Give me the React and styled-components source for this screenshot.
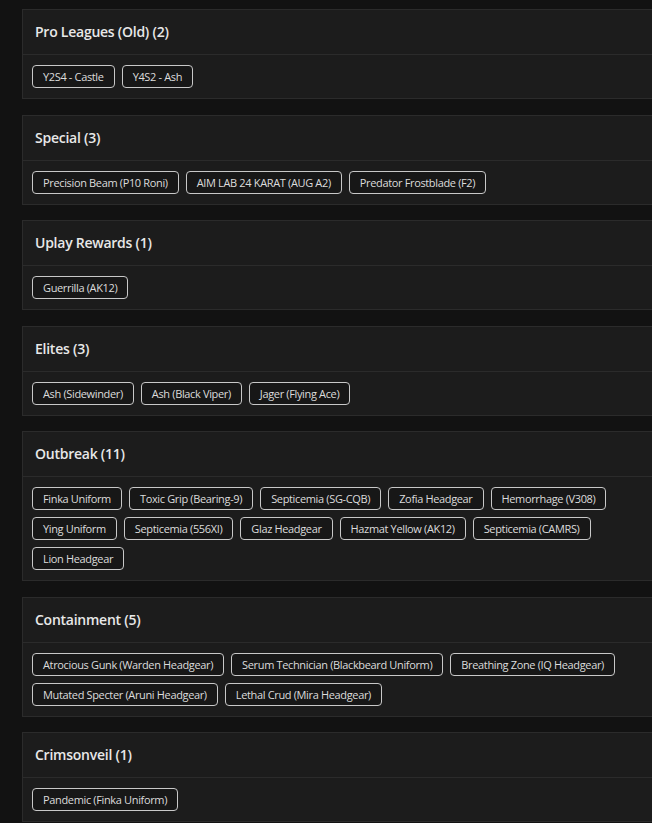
import styled, { createGlobalStyle } from "styled-components";

const GlobalStyle = createGlobalStyle`
  html, body {
    margin: 0;
    padding: 0;
    background: #121212;
    overflow: hidden;
  }
  body {
    font-family: "Open Sans", "Liberation Sans", sans-serif;
    color: #e4e4e4;
  }
`;

const Page = styled.div`
  display: flex;
  flex-direction: column;
  gap: 15.5px;
  padding: 9px 0 0 22px;
  width: 680px;
`;

const Card = styled.section`
  background: #1c1c1c;
  border: 1px solid #2b2b2b;
`;

const Header = styled.div`
  display: flex;
  align-items: center;
  height: 45px;
  box-sizing: border-box;
  padding: 0 12px 1px;
  border-bottom: 1px solid #2b2b2b;
`;

const Title = styled.h3`
  margin: 0;
  font-size: 14px;
  font-weight: 600;
  letter-spacing: -0.25px;
  color: #e8e8e8;
`;

const Body = styled.div`
  display: flex;
  flex-wrap: wrap;
  gap: 7px 7px;
  padding: 10px 9px;
  max-width: 630px;
`;

const Chip = styled.span`
  display: inline-flex;
  align-items: center;
  height: 23px;
  box-sizing: border-box;
  padding: 0 10px;
  border: 1px solid #c8c8c8;
  border-radius: 4px;
  background: #171717;
  color: #dcdcdc;
  font-size: 11px;
  letter-spacing: -0.35px;
  white-space: nowrap;
`;

const groups = [
  { name: "Pro Leagues (Old)", items: ["Y2S4 - Castle", "Y4S2 - Ash"] },
  {
    name: "Special",
    items: ["Precision Beam (P10 Roni)", "AIM LAB 24 KARAT (AUG A2)", "Predator Frostblade (F2)"],
  },
  { name: "Uplay Rewards", items: ["Guerrilla (AK12)"] },
  { name: "Elites", items: ["Ash (Sidewinder)", "Ash (Black Viper)", "Jager (Flying Ace)"] },
  {
    name: "Outbreak",
    items: [
      "Finka Uniform",
      "Toxic Grip (Bearing-9)",
      "Septicemia (SG-CQB)",
      "Zofia Headgear",
      "Hemorrhage (V308)",
      "Ying Uniform",
      "Septicemia (556XI)",
      "Glaz Headgear",
      "Hazmat Yellow (AK12)",
      "Septicemia (CAMRS)",
      "Lion Headgear",
    ],
  },
  {
    name: "Containment",
    items: [
      "Atrocious Gunk (Warden Headgear)",
      "Serum Technician (Blackbeard Uniform)",
      "Breathing Zone (IQ Headgear)",
      "Mutated Specter (Aruni Headgear)",
      "Lethal Crud (Mira Headgear)",
    ],
  },
  { name: "Crimsonveil", items: ["Pandemic (Finka Uniform)"] },
];

export default function App() {
  return (
    <>
      <GlobalStyle />
      <Page>
        {groups.map((g) => (
          <Card key={g.name}>
            <Header>
              <Title>
                {g.name} ({g.items.length})
              </Title>
            </Header>
            <Body>
              {g.items.map((item) => (
                <Chip key={item}>{item}</Chip>
              ))}
            </Body>
          </Card>
        ))}
      </Page>
    </>
  );
}
